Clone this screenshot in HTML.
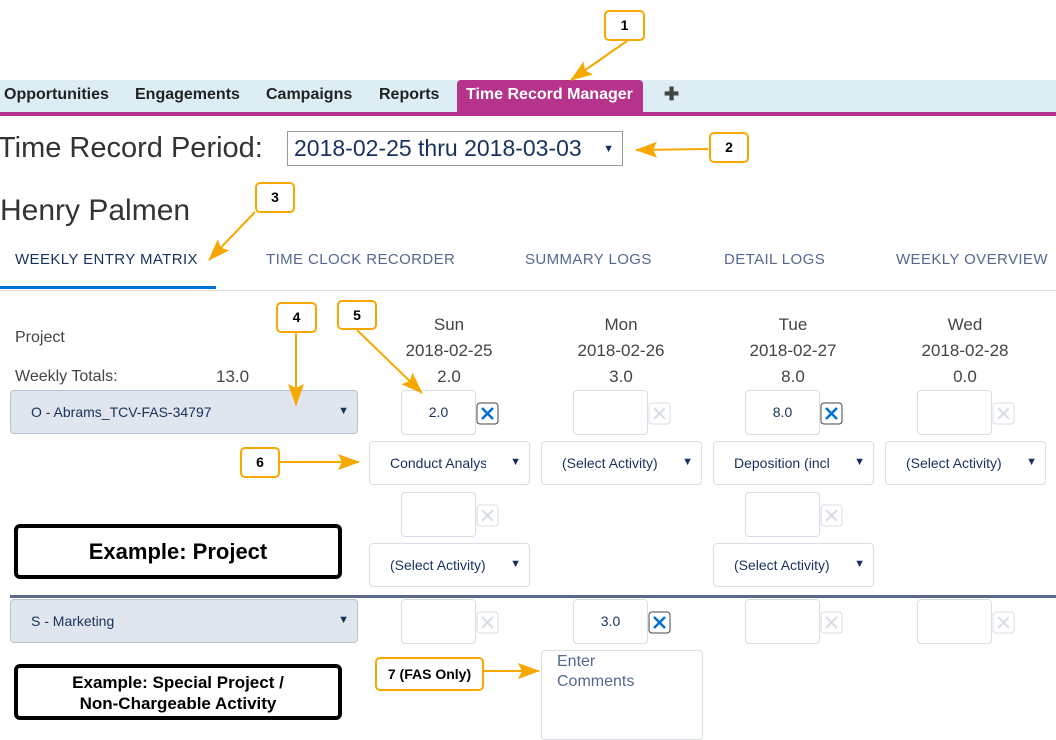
<!DOCTYPE html>
<html><head><meta charset="utf-8"><style>
*{box-sizing:border-box;margin:0;padding:0}
body{width:1056px;height:730px;overflow:hidden;background:#fff;font-family:"Liberation Sans",sans-serif;position:relative}
.a{position:absolute}
.nav{left:0;top:80px;width:1056px;height:32px;background:#dcedf4}
.navb{left:0;top:112px;width:1056px;height:4px;background:#b5338a}
.nt{top:86px;font-weight:bold;font-size:16px;color:#222}
.sel{border:1px solid #d8dde6;border-radius:4px;background:#fff;font-size:14px;color:#16325c;height:44px;width:161px}
.sel span{position:absolute;left:20px;top:13px;white-space:nowrap;overflow:hidden;width:96px}
.sel i{position:absolute;right:8px;top:14px;font-style:normal;font-size:11px;color:#16325c}
.inp{border:1px solid #d8dde6;border-radius:4px;background:#fff;width:75px;height:45px;font-size:14px;color:#16325c;text-align:center;line-height:43px}
.hd{font-size:17px;color:#444;text-align:center;width:172px}
.proj{left:10px;width:348px;height:44px;background:#e0e5ee;border:1px solid #b8c2d2;border-radius:4px;font-size:14px;color:#16325c}
.co{border:2px solid #f7a800;border-radius:5px;background:#fff;font-weight:bold;font-size:14px;text-align:center;color:#000}
.ex{border:4px solid #000;border-radius:6px;font-weight:bold;color:#000;text-align:center}
.tab{top:251px;font-size:15px;letter-spacing:.4px;color:#54698d}
</style></head><body>
<div class="a nav"></div><div class="a navb"></div>
<div class="a" style="left:457px;top:80px;width:186px;height:32px;background:#b5338a;border-radius:4px 4px 0 0"></div>
<div class="a nt" style="left:4px">Opportunities</div>
<div class="a nt" style="left:135px">Engagements</div>
<div class="a nt" style="left:266px">Campaigns</div>
<div class="a nt" style="left:379px">Reports</div>
<div class="a nt" style="left:466px;color:#fff">Time Record Manager</div>
<div class="a nt" style="left:664px;font-size:18px;top:84px;color:#444">✚</div>

<div class="a" style="left:-2px;top:132px;font-size:29px;color:#333">Time Record Period:</div>
<div class="a" style="left:287px;top:131px;width:336px;height:35px;border:1px solid #999;font-size:23px;color:#16325c;padding:3px 0 0 6px">2018-02-25 thru 2018-03-03 <span style="font-size:11px;position:absolute;right:8px;top:11px">▼</span></div>
<div class="a" style="left:0;top:194px;font-size:30px;color:#333">Henry Palmen</div>

<div class="a tab" style="left:15px;color:#16325c">WEEKLY ENTRY MATRIX</div>
<div class="a tab" style="left:266px">TIME CLOCK RECORDER</div>
<div class="a tab" style="left:525px">SUMMARY LOGS</div>
<div class="a tab" style="left:724px">DETAIL LOGS</div>
<div class="a tab" style="left:896px">WEEKLY OVERVIEW</div>
<div class="a" style="left:0;top:290px;width:1056px;height:1px;background:#d8dde6"></div>
<div class="a" style="left:0;top:286px;width:216px;height:3px;background:#0070d2"></div>

<div class="a" style="left:15px;top:329px;font-size:16px;color:#444">Project</div>
<div class="a" style="left:15px;top:368px;font-size:16px;color:#444">Weekly Totals:</div>
<div class="a" style="left:216px;top:367px;font-size:17px;color:#444">13.0</div>

<div class="a hd" style="left:363px;top:315px">Sun</div><div class="a hd" style="left:363px;top:341px">2018-02-25</div><div class="a hd" style="left:363px;top:367px">2.0</div>
<div class="a hd" style="left:535px;top:315px">Mon</div><div class="a hd" style="left:535px;top:341px">2018-02-26</div><div class="a hd" style="left:535px;top:367px">3.0</div>
<div class="a hd" style="left:707px;top:315px">Tue</div><div class="a hd" style="left:707px;top:341px">2018-02-27</div><div class="a hd" style="left:707px;top:367px">8.0</div>
<div class="a hd" style="left:879px;top:315px">Wed</div><div class="a hd" style="left:879px;top:341px">2018-02-28</div><div class="a hd" style="left:879px;top:367px">0.0</div>

<div class="a proj" style="top:390px"><span class="a" style="left:20px;top:13px">O - Abrams_TCV-FAS-34797</span><span class="a" style="right:8px;top:14px;font-size:11px">▼</span></div>
<div class="a proj" style="top:599px"><span class="a" style="left:20px;top:13px">S - Marketing</span><span class="a" style="right:8px;top:14px;font-size:11px">▼</span></div>

<div class="a inp" style="left:401px;top:390px">2.0</div>
<div class="a inp" style="left:573px;top:390px"></div>
<div class="a inp" style="left:745px;top:390px">8.0</div>
<div class="a inp" style="left:917px;top:390px"></div>
<svg class="a" style="left:476px;top:402px" width="24" height="24"><rect x="1" y="1" width="21" height="21" rx="3" fill="#fff" stroke="#444"/><path d="M6 6L17 17M17 6L6 17" stroke="#0070d2" stroke-width="2.5"/></svg>
<svg class="a" style="left:648px;top:402px" width="24" height="24"><rect x="1" y="1" width="21" height="21" rx="3" fill="#fff" stroke="#d8dde6"/><path d="M6 6L17 17M17 6L6 17" stroke="#d8dde6" stroke-width="2"/></svg>
<svg class="a" style="left:820px;top:402px" width="24" height="24"><rect x="1" y="1" width="21" height="21" rx="3" fill="#fff" stroke="#444"/><path d="M6 6L17 17M17 6L6 17" stroke="#0070d2" stroke-width="2.5"/></svg>
<svg class="a" style="left:992px;top:402px" width="24" height="24"><rect x="1" y="1" width="21" height="21" rx="3" fill="#fff" stroke="#d8dde6"/><path d="M6 6L17 17M17 6L6 17" stroke="#d8dde6" stroke-width="2"/></svg>

<div class="a sel" style="left:369px;top:441px"><span>Conduct Analysis</span><i>▼</i></div>
<div class="a sel" style="left:541px;top:441px"><span>(Select Activity)</span><i>▼</i></div>
<div class="a sel" style="left:713px;top:441px"><span>Deposition (incl)</span><i>▼</i></div>
<div class="a sel" style="left:885px;top:441px"><span>(Select Activity)</span><i>▼</i></div>

<div class="a inp" style="left:401px;top:492px"></div>
<div class="a inp" style="left:745px;top:492px"></div>
<svg class="a" style="left:476px;top:504px" width="24" height="24"><rect x="1" y="1" width="21" height="21" rx="3" fill="#fff" stroke="#d8dde6"/><path d="M6 6L17 17M17 6L6 17" stroke="#d8dde6" stroke-width="2"/></svg>
<svg class="a" style="left:820px;top:504px" width="24" height="24"><rect x="1" y="1" width="21" height="21" rx="3" fill="#fff" stroke="#d8dde6"/><path d="M6 6L17 17M17 6L6 17" stroke="#d8dde6" stroke-width="2"/></svg>
<div class="a sel" style="left:369px;top:543px"><span>(Select Activity)</span><i>▼</i></div>
<div class="a sel" style="left:713px;top:543px"><span>(Select Activity)</span><i>▼</i></div>

<div class="a" style="left:10px;top:595px;width:1046px;height:3px;background:#5a6a8a"></div>

<div class="a inp" style="left:401px;top:599px"></div>
<div class="a inp" style="left:573px;top:599px">3.0</div>
<div class="a inp" style="left:745px;top:599px"></div>
<div class="a inp" style="left:917px;top:599px"></div>
<svg class="a" style="left:476px;top:611px" width="24" height="24"><rect x="1" y="1" width="21" height="21" rx="3" fill="#fff" stroke="#d8dde6"/><path d="M6 6L17 17M17 6L6 17" stroke="#d8dde6" stroke-width="2"/></svg>
<svg class="a" style="left:648px;top:611px" width="24" height="24"><rect x="1" y="1" width="21" height="21" rx="3" fill="#fff" stroke="#444"/><path d="M6 6L17 17M17 6L6 17" stroke="#0070d2" stroke-width="2.5"/></svg>
<svg class="a" style="left:820px;top:611px" width="24" height="24"><rect x="1" y="1" width="21" height="21" rx="3" fill="#fff" stroke="#d8dde6"/><path d="M6 6L17 17M17 6L6 17" stroke="#d8dde6" stroke-width="2"/></svg>
<svg class="a" style="left:992px;top:611px" width="24" height="24"><rect x="1" y="1" width="21" height="21" rx="3" fill="#fff" stroke="#d8dde6"/><path d="M6 6L17 17M17 6L6 17" stroke="#d8dde6" stroke-width="2"/></svg>

<div class="a" style="left:541px;top:650px;width:162px;height:90px;border:1px solid #d8dde6;border-radius:4px;font-size:16px;color:#54698d;padding:1px 0 0 15px;line-height:20px">Enter<br>Comments</div>

<div class="a ex" style="left:14px;top:524px;width:328px;height:55px;font-size:22px;line-height:47px">Example: Project</div>
<div class="a ex" style="left:14px;top:664px;width:328px;height:56px;font-size:17px;line-height:21px;padding-top:4px">Example: Special Project /<br>Non-Chargeable Activity</div>

<div class="a co" style="left:604px;top:10px;width:41px;height:31px;line-height:27px">1</div>
<div class="a co" style="left:709px;top:132px;width:40px;height:31px;line-height:27px">2</div>
<div class="a co" style="left:255px;top:182px;width:40px;height:31px;line-height:27px">3</div>
<div class="a co" style="left:276px;top:302px;width:41px;height:31px;line-height:27px">4</div>
<div class="a co" style="left:337px;top:300px;width:40px;height:30px;line-height:26px">5</div>
<div class="a co" style="left:240px;top:447px;width:40px;height:31px;line-height:27px">6</div>
<div class="a co" style="left:375px;top:657px;width:109px;height:34px;line-height:30px">7 (FAS Only)</div>

<svg class="a" style="left:0;top:0" width="1056" height="730">
<defs>
<marker id="h" markerWidth="22" markerHeight="16" refX="21" refY="8" orient="auto" markerUnits="userSpaceOnUse"><path d="M0 0L22 8L0 16L4 8Z" fill="#f7a800"/></marker></defs>
<g stroke="#f7a800" stroke-width="2" fill="none">
<line x1="627" y1="41" x2="571" y2="80" marker-end="url(#h)"/>
<line x1="708" y1="149" x2="636" y2="150" marker-end="url(#h)"/>
<line x1="255" y1="212" x2="209" y2="260" marker-end="url(#h)"/>
<line x1="296" y1="333" x2="296" y2="405" marker-end="url(#h)"/>
<line x1="357" y1="330" x2="422" y2="393" marker-end="url(#h)"/>
<line x1="280" y1="462" x2="359" y2="462" marker-end="url(#h)"/>
<line x1="484" y1="671" x2="539" y2="671" marker-end="url(#h)"/>
</g></svg>
</body></html>
